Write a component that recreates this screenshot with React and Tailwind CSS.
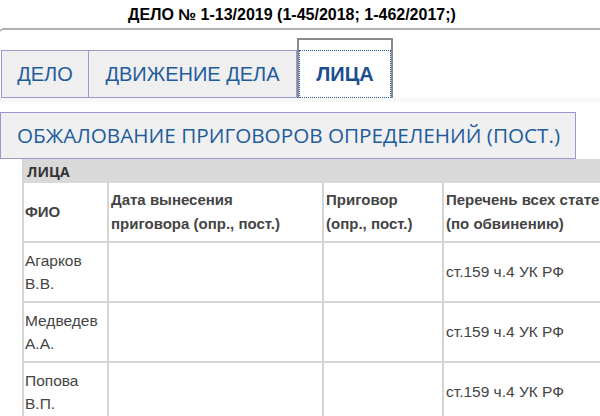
export default function App() {
  const rows = [
    ["Агарков", "В.В."],
    ["Медведев", "А.А."],
    ["Попова", "В.П."],
  ];
  return (
    <div className="w-[600px] h-[416px] overflow-hidden bg-white" style={{ fontFamily: '"Liberation Sans", Arial, sans-serif' }}>
      <div className="h-[28px] flex items-center justify-center pr-[16px] pt-[1px]">
        <h1 className="text-[16px] font-bold text-black leading-none">ДЕЛО № 1-13/2019 (1-45/2018; 1-462/2017;)</h1>
      </div>
      <div className="border-t-2 border-l border-[#b0b0b0] rounded-tl-[5px] -ml-[1px] pt-[8px]">
        <div className="flex items-end h-[60px] ml-[1px]">
          <div className="h-[48px] w-[88px] flex items-center justify-center bg-[#efefef] border border-[#9a9ad0] text-[20px] text-[#1f5c9e]">ДЕЛО</div>
          <div className="h-[48px] w-[208px] flex items-center justify-center bg-[#efefef] border border-l-0 border-[#9a9ad0] text-[20px] text-[#1f5c9e]">ДВИЖЕНИЕ ДЕЛА</div>
          <div className="h-[60px] w-[96px] bg-white border-t-2 border-x-2 border-[#8a8a8a] pt-[10px]">
            <div className="h-full border border-dotted border-[#1f5c9e] flex items-center justify-center text-[20px] font-bold text-[#1a4f8f]">ЛИЦА</div>
          </div>
        </div>
      </div>
      <div className="h-[4px] bg-[#f7f7f7]"></div>
      <div className="pt-[10px]">
        <div className="w-[576px] h-[47px] bg-[#f0f0f0] border border-[#9a9ad0] flex items-center pl-[16px] text-[20.7px] text-[#1f5c9e]" style={{ fontFamily: '"Open Sans", sans-serif' }}>
          ОБЖАЛОВАНИЕ ПРИГОВОРОВ ОПРЕДЕЛЕНИЙ (ПОСТ.)
        </div>
      </div>
      <div className="ml-[22px] border-l-2 border-[#d4d4d4]">
        <div className="h-[24px] bg-[#d9d9d9] flex items-center pl-[3px] text-[14px] font-bold text-[#333]" style={{ fontFamily: '"Open Sans", sans-serif' }}>ЛИЦА</div>
        <div className="grid grid-cols-[83px_215px_120px_200px] text-[15.5px] text-[#444]">
          <div className="h-[60px] border-b-2 border-[#d4d4d4] flex items-center pl-[1px] font-bold text-[15px]">ФИО</div>
          <div className="h-[60px] border-b-2 border-l-2 border-[#d4d4d4] flex items-center pl-[2px] font-bold text-[15px] leading-[24px]">Дата вынесения<br />приговора (опр., пост.)</div>
          <div className="h-[60px] border-b-2 border-l-2 border-[#d4d4d4] flex items-center pl-[2px] font-bold text-[15px] leading-[24px]">Приговор<br />(опр., пост.)</div>
          <div className="h-[60px] border-b-2 border-l-2 border-[#d4d4d4] flex items-center pl-[2px] font-bold text-[15px] leading-[24px] whitespace-nowrap">Перечень всех статей<br />(по обвинению)</div>
          {rows.map((r, i) => (
            <>
              <div key={"a" + i} className="h-[60px] border-b-2 border-[#d4d4d4] flex items-center pl-[1px] leading-[23px]">{r[0]}<br />{r[1]}</div>
              <div key={"b" + i} className="h-[60px] border-b-2 border-l-2 border-[#d4d4d4]"></div>
              <div key={"c" + i} className="h-[60px] border-b-2 border-l-2 border-[#d4d4d4]"></div>
              <div key={"d" + i} className="h-[60px] border-b-2 border-l-2 border-[#d4d4d4] flex items-center pl-[2px]">ст.159 ч.4 УК РФ</div>
            </>
          ))}
        </div>
      </div>
    </div>
  );
}
